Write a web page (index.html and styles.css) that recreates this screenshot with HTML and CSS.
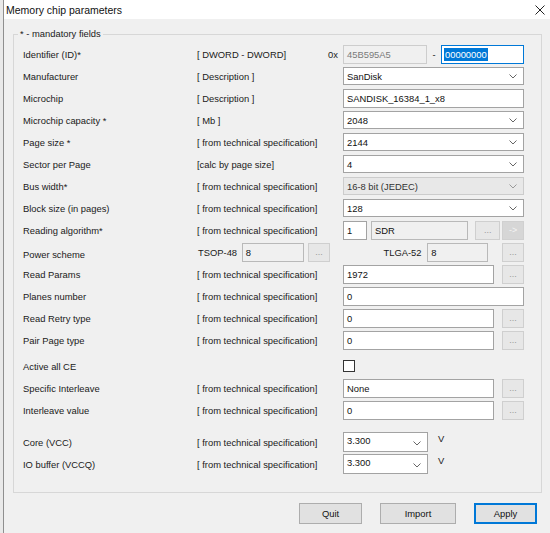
FILE: index.html
```html
<!DOCTYPE html>
<html lang="en">
<head>
  <meta charset="UTF-8">
  <title>Memory chip parameters</title>
  <link rel="stylesheet" href="styles.css">
</head>
<body>
  <div class="window">
    <div class="titlebar">
      <span class="title">Memory chip parameters</span>
      <svg class="close" width="10" height="10" viewBox="0 0 10 10"><path d="M0.5 0.5 L9.5 9.5 M9.5 0.5 L0.5 9.5" stroke="#222" stroke-width="1" fill="none"/></svg>
    </div>

    <fieldset class="group">
      <legend>* - mandatory fields</legend>

      <div class="row">
        <span class="label">Identifier (ID)*</span>
        <span class="hint">[ DWORD - DWORD]<span class="prefix">0x</span></span>
        <div class="ctrl">
          <div class="edit disabled w84">45B595A5</div>
          <span class="dash">-</span>
          <div class="edit focused grow"><span class="sel">00000000</span></div>
        </div>
      </div>

      <div class="row">
        <span class="label">Manufacturer</span>
        <span class="hint">[ Description ]</span>
        <div class="ctrl">
          <div class="combo grow">SanDisk<svg class="chev" width="8" height="5" viewBox="0 0 8 5"><path d="M0.5 0.5 L4 4 L7.5 0.5" stroke="#666" fill="none"/></svg></div>
        </div>
      </div>

      <div class="row">
        <span class="label">Microchip</span>
        <span class="hint">[ Description ]</span>
        <div class="ctrl">
          <div class="edit grow">SANDISK_16384_1_x8</div>
        </div>
      </div>

      <div class="row">
        <span class="label">Microchip capacity *</span>
        <span class="hint">[ Mb ]</span>
        <div class="ctrl">
          <div class="combo grow">2048<svg class="chev" width="8" height="5" viewBox="0 0 8 5"><path d="M0.5 0.5 L4 4 L7.5 0.5" stroke="#666" fill="none"/></svg></div>
        </div>
      </div>

      <div class="row">
        <span class="label">Page size *</span>
        <span class="hint">[ from technical specification]</span>
        <div class="ctrl">
          <div class="combo grow">2144<svg class="chev" width="8" height="5" viewBox="0 0 8 5"><path d="M0.5 0.5 L4 4 L7.5 0.5" stroke="#666" fill="none"/></svg></div>
        </div>
      </div>

      <div class="row">
        <span class="label">Sector per Page</span>
        <span class="hint">[calc by page size]</span>
        <div class="ctrl">
          <div class="combo grow">4<svg class="chev" width="8" height="5" viewBox="0 0 8 5"><path d="M0.5 0.5 L4 4 L7.5 0.5" stroke="#666" fill="none"/></svg></div>
        </div>
      </div>

      <div class="row">
        <span class="label">Bus width*</span>
        <span class="hint">[ from technical specification]</span>
        <div class="ctrl">
          <div class="combo disabled grow">16-8 bit (JEDEC)<svg class="chev" width="8" height="5" viewBox="0 0 8 5"><path d="M0.5 0.5 L4 4 L7.5 0.5" stroke="#999" fill="none"/></svg></div>
        </div>
      </div>

      <div class="row">
        <span class="label">Block size (in pages)</span>
        <span class="hint">[ from technical specification]</span>
        <div class="ctrl">
          <div class="combo grow">128<svg class="chev" width="8" height="5" viewBox="0 0 8 5"><path d="M0.5 0.5 L4 4 L7.5 0.5" stroke="#666" fill="none"/></svg></div>
        </div>
      </div>

      <div class="row">
        <span class="label">Reading algorithm*</span>
        <span class="hint">[ from technical specification]</span>
        <div class="ctrl">
          <div class="edit w24">1</div>
          <div class="edit readonly w98 ml4">SDR</div>
          <div class="btn-mini w25 ml7">...</div>
          <div class="btn-mini dark w22 ml2">-&gt;</div>
        </div>
      </div>

      <div class="row">
        <span class="label low">Power scheme</span>
        <div class="power">
          <span class="chip">TSOP-48</span>
          <div class="edit readonly w62">8</div>
          <div class="btn-mini w23 ml4">...</div>
          <span class="chip ml53">TLGA-52</span>
          <div class="edit readonly w61">8</div>
          <div class="btn-mini w22 ml14">...</div>
        </div>
      </div>

      <div class="row">
        <span class="label">Read Params</span>
        <span class="hint">[ from technical specification]</span>
        <div class="ctrl">
          <div class="edit grow">1972</div>
          <div class="btn-mini w22 ml8">...</div>
        </div>
      </div>

      <div class="row">
        <span class="label">Planes number</span>
        <span class="hint">[ from technical specification]</span>
        <div class="ctrl">
          <div class="edit grow">0</div>
        </div>
      </div>

      <div class="row">
        <span class="label">Read Retry type</span>
        <span class="hint">[ from technical specification]</span>
        <div class="ctrl">
          <div class="edit grow">0</div>
          <div class="btn-mini w22 ml8">...</div>
        </div>
      </div>

      <div class="row">
        <span class="label">Pair Page type</span>
        <span class="hint">[ from technical specification]</span>
        <div class="ctrl">
          <div class="edit grow">0</div>
          <div class="btn-mini w22 ml8">...</div>
        </div>
      </div>

      <div class="row active-ce">
        <span class="label">Active all CE</span>
        <span class="hint"></span>
        <div class="ctrl">
          <span class="check"></span>
        </div>
      </div>

      <div class="row">
        <span class="label">Specific Interleave</span>
        <span class="hint">[ from technical specification]</span>
        <div class="ctrl">
          <div class="edit grow">None</div>
          <div class="btn-mini w22 ml8">...</div>
        </div>
      </div>

      <div class="row">
        <span class="label">Interleave value</span>
        <span class="hint">[ from technical specification]</span>
        <div class="ctrl">
          <div class="edit grow">0</div>
          <div class="btn-mini w22 ml8">...</div>
        </div>
      </div>

      <div class="row core">
        <span class="label">Core (VCC)</span>
        <span class="hint">[ from technical specification]</span>
        <div class="ctrl">
          <div class="combo tall w85">3.300<svg class="chev" width="8" height="5" viewBox="0 0 8 5"><path d="M0.5 0.5 L4 4 L7.5 0.5" stroke="#666" fill="none"/></svg></div>
          <span class="unit">V</span>
        </div>
      </div>

      <div class="row">
        <span class="label">IO buffer (VCCQ)</span>
        <span class="hint">[ from technical specification]</span>
        <div class="ctrl">
          <div class="combo tall w85">3.300<svg class="chev" width="8" height="5" viewBox="0 0 8 5"><path d="M0.5 0.5 L4 4 L7.5 0.5" stroke="#666" fill="none"/></svg></div>
          <span class="unit">V</span>
        </div>
      </div>
    </fieldset>

    <div class="buttons">
      <div class="button w63">Quit</div>
      <div class="button w76">Import</div>
      <div class="button default w63">Apply</div>
    </div>
  </div>
</body>
</html>
```

FILE: styles.css
```css
* {
  margin: 0;
  padding: 0;
  box-sizing: border-box;
}

html, body {
  width: 550px;
  height: 533px;
  overflow: hidden;
  background: #e9e9e9;
  font-family: "Liberation Sans", Arial, sans-serif;
  font-size: 9.4px;
  color: #1a1a1a;
}

.window {
  margin-left: 3px;
  width: 547px;
  height: 533px;
  border-left: 1px solid #8f8f8f;
  background: #f0f0f0;
  display: flex;
  flex-direction: column;
}

.titlebar {
  height: 19px;
  background: #fff;
  display: flex;
  align-items: center;
  padding-left: 2px;
  padding-right: 5px;
}

.title {
  font-size: 10.5px;
  color: #111;
  flex: 1;
}

.close {
  display: block;
}

.group {
  margin: 9px 0 0 9px;
  width: 529px;
  border: 1px solid #d7d7d7;
  padding: 3px 16px 17px 9px;
}

.group legend {
  margin-left: -5px;
  padding: 0 2px;
  line-height: 12px;
}

.row {
  display: grid;
  grid-template-columns: 174px 146px 181px;
  height: 22px;
  align-items: center;
}

.row.active-ce {
  margin-top: 4px;
}

.row.core {
  margin-top: 10px;
}

.label {
  white-space: nowrap;
}

.label.low {
  padding-top: 5px;
}

.hint {
  display: flex;
  white-space: nowrap;
}

.prefix {
  margin-left: auto;
  padding-right: 5px;
}

.ctrl {
  display: flex;
  align-items: center;
}

.power {
  grid-column: 2 / 4;
  display: flex;
  align-items: center;
  padding-left: 1px;
}

.chip {
  white-space: nowrap;
  width: 44px;
}

.edit,
.combo {
  height: 19px;
  background: #fff;
  border: 1px solid #a3a3a3;
  padding-left: 3px;
  display: flex;
  align-items: center;
  white-space: nowrap;
  overflow: hidden;
  color: #111;
}

.combo {
  height: 18px;
  position: relative;
}

.combo.tall {
  height: 20px;
  align-items: flex-start;
  padding-top: 2px;
}

.chev {
  position: absolute;
  right: 6px;
  top: 6px;
}

.combo.tall .chev {
  top: 8px;
}

.edit.disabled {
  background: #f0f0f0;
  border-color: #cdcdcd;
  color: #7a7a7a;
}

.edit.readonly {
  background: #f0f0f0;
  border-color: #b9b9b9;
}

.combo.disabled {
  background: #e8e8e8;
  border-color: #cccccc;
  color: #333;
}

.edit.focused {
  border-color: #0078d7;
  padding-left: 2px;
}

.sel {
  background: #0078d7;
  color: #fff;
  line-height: 13px;
  padding: 0 1px;
}

.dash {
  width: 14px;
  text-align: center;
}

.grow {
  flex: 1;
}

.btn-mini {
  height: 19px;
  background: #e7e7e7;
  border: 1px solid #cfcfcf;
  color: #9a9a9a;
  font-size: 9px;
  display: flex;
  align-items: center;
  justify-content: center;
}

.btn-mini.dark {
  background: #d6d6d6;
  border-color: #d0d0d0;
  color: #f4f4f4;
}

.check {
  width: 12px;
  height: 12px;
  background: #fff;
  border: 1px solid #333;
}

.unit {
  margin-left: 10px;
  align-self: flex-start;
  padding-top: 1px;
}

.buttons {
  display: flex;
  justify-content: flex-end;
  gap: 18px;
  margin-top: 10px;
  padding-right: 13px;
}

.button {
  height: 21px;
  background: #e1e1e1;
  border: 1px solid #adadad;
  display: flex;
  align-items: center;
  justify-content: center;
  color: #111;
}

.button.default {
  border-color: #0078d7;
  box-shadow: inset 0 0 0 1px #0078d7;
}

.w22 { width: 22px; }
.w23 { width: 23px; }
.w24 { width: 24px; }
.w25 { width: 25px; }
.w61 { width: 61px; }
.w62 { width: 62px; }
.w63 { width: 63px; }
.w76 { width: 76px; }
.w84 { width: 84px; }
.w85 { width: 85px; }
.w98 { width: 98px; }

.ml2 { margin-left: 2px; }
.ml4 { margin-left: 4px; }
.ml7 { margin-left: 7px; }
.ml8 { margin-left: 8px; }
.ml14 { margin-left: 14px; }
.ml53 { margin-left: 53px; }
```
